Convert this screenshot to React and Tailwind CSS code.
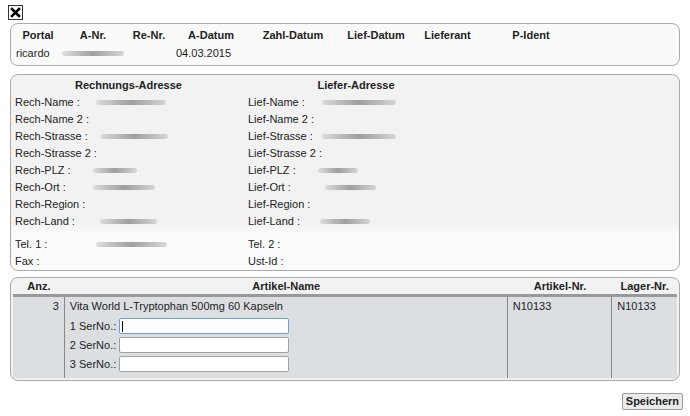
import React from "react";

function Blur({ w, ml = 0 }) {
  return (
    <div
      className="h-[5px] rounded-full bg-gradient-to-r from-[#d8d8d8] via-[#8a8a8a] to-[#d0d0d0] blur-[0.7px] opacity-80"
      style={{ width: w, marginLeft: ml }}
    />
  );
}

function Row({ label, lw, blur, bml, cls = "h-[17px]" }) {
  return (
    <div className={`flex items-center whitespace-nowrap ${cls}`}>
      <div className="shrink-0" style={{ width: lw }}>{label}</div>
      {blur ? <Blur w={blur} ml={bml} /> : null}
    </div>
  );
}

export default function App() {
  const left = [
    ["Rech-Name :", 70, 0],
    ["Rech-Name 2 :", 0, 0],
    ["Rech-Strasse :", 68, 4],
    ["Rech-Strasse 2 :", 0, 0],
    ["Rech-PLZ :", 44, -3],
    ["Rech-Ort :", 62, -3],
    ["Rech-Region :", 0, 0],
    ["Rech-Land :", 57, 4],
  ];
  const right = [
    ["Lief-Name :", 74, 0],
    ["Lief-Name 2 :", 0, 0],
    ["Lief-Strasse :", 74, 0],
    ["Lief-Strasse 2 :", 0, 0],
    ["Lief-PLZ :", 40, -4],
    ["Lief-Ort :", 51, 3],
    ["Lief-Region :", 0, 0],
    ["Lief-Land :", 50, -2],
  ];
  return (
    <div className="w-[690px] h-[416px] bg-white text-[11px] leading-[13px] text-[#222] font-['Liberation_Sans',Arial,sans-serif] overflow-hidden">
      <div className="pt-[5px] pl-[8px] h-[23px]">
        <div className="w-[15px] h-[15px] border border-[#333] flex items-center justify-center">
          <svg width="11" height="11" viewBox="0 0 11 11">
            <path d="M2 2 L9 9 M9 2 L2 9" stroke="#000" strokeWidth="2.6" strokeLinecap="square" />
          </svg>
        </div>
      </div>

      <div className="mx-[10px] h-[43px] rounded-[8px] border border-[#aaaaaa] bg-[#fafafa] pl-[4px] pt-[5px]">
        <div className="flex font-bold h-[12px] items-center">
          <div className="w-[46px] text-center">Portal</div>
          <div className="w-[64px] text-center">A-Nr.</div>
          <div className="w-[48px] text-center">Re-Nr.</div>
          <div className="w-[76px] text-center">A-Datum</div>
          <div className="w-[88px] text-center">Zahl-Datum</div>
          <div className="w-[78px] text-center">Lief-Datum</div>
          <div className="w-[65px] text-center">Lieferant</div>
          <div className="w-[102px] text-center">P-Ident</div>
        </div>
        <div className="flex h-[12px] items-center mt-[6px]">
          <div className="w-[46px] pl-[1px]">ricardo</div>
          <div className="w-[64px] flex items-center"><Blur w={62} ml={1} /></div>
          <div className="w-[48px]"></div>
          <div className="w-[76px] pl-[3px]">04.03.2015</div>
        </div>
      </div>

      <div className="mx-[10px] mt-[8px] h-[197px] rounded-[8px] border border-[#aaaaaa] bg-[linear-gradient(to_bottom,#f2f2f2_0%,#f2f2f2_76%,#fbfbfb_82%,#fbfbfb_100%)] pl-[4px] pt-[4px]">
        <div className="flex">
          <div className="w-[233px]">
            <div className="font-bold text-center w-[227px] h-[15px]">Rechnungs-Adresse</div>
            {left.map(([l, b, m]) => (
              <Row key={l} label={l} lw={81} blur={b} bml={m} />
            ))}
            <div className="h-[5px]" />
            <Row label="Tel. 1 :" lw={81} blur={71} cls="h-[18px]" />
            <Row label="Fax :" lw={81} cls="h-[17px]" />
          </div>
          <div className="w-[240px]">
            <div className="font-bold text-center w-[216px] h-[15px]">Liefer-Adresse</div>
            {right.map(([l, b, m]) => (
              <Row key={l} label={l} lw={74} blur={b} bml={m} />
            ))}
            <div className="h-[5px]" />
            <Row label="Tel. 2 :" lw={74} cls="h-[18px]" />
            <Row label="Ust-Id :" lw={74} cls="h-[17px]" />
          </div>
        </div>
      </div>

      <div className="mx-[10px] mt-[6px] h-[104px] rounded-[8px] border border-[#aaaaaa] bg-[#f2f2f2] px-[2px]">
        <div className="flex font-bold h-[16px] items-center border-b-[3px] border-[#999999] box-content">
          <div className="w-[52px] text-center">Anz.</div>
          <div className="w-[445px] text-center">Artikel-Name</div>
          <div className="w-[105px] text-center">Artikel-Nr.</div>
          <div className="w-[65px] text-center">Lager-Nr.</div>
        </div>
        <div className="flex h-[81px] bg-[#dcdfe2]">
          <div className="w-[52px] text-right pr-[5px] pt-[3px] border-r border-[#888]">3</div>
          <div className="w-[445px] pl-[5px] pt-[3px] border-r border-[#888]">
            <div className="h-[14px]">Vita World L-Tryptophan 500mg 60 Kapseln</div>
            {[1, 2, 3].map((n) => (
              <div key={n} className={`flex items-center ${n === 1 ? "mt-[4px]" : "mt-[3px]"}`}>
                <div className="w-[49px]">{n} SerNo.:</div>
                <div
                  className={`w-[170px] h-[16px] rounded-[2px] bg-white border ${
                    n === 1 ? "border-[#6a9ee0]" : "border-[#a0a0a0]"
                  } flex items-center pl-[2px]`}
                >
                  {n === 1 ? <div className="w-[1px] h-[11px] bg-black" /> : null}
                </div>
              </div>
            ))}
          </div>
          <div className="w-[105px] pl-[5px] pt-[3px] border-r border-[#888]">N10133</div>
          <div className="w-[65px] pl-[5px] pt-[3px]">N10133</div>
        </div>
      </div>

      <div className="flex justify-end pr-[7px] mt-[12px]">
        <div className="h-[17px] px-[3px] flex items-center font-bold bg-[#ebebeb] border border-[#9a9a9a] rounded-[2px]">
          Speichern
        </div>
      </div>
    </div>
  );
}
